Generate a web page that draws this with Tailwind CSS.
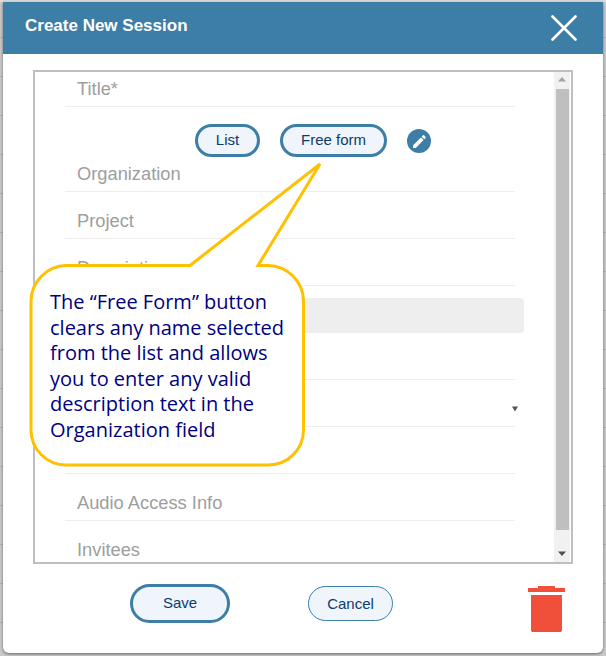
<!DOCTYPE html>
<html lang="en">
<head>
    <meta charset="UTF-8">
    <title>Create New Session</title>
    <script src="https://cdn.jsdelivr.net/npm/@tailwindcss/browser@4"></script>
</head>
<body class="relative w-[606px] h-[656px] overflow-hidden bg-[repeating-linear-gradient(180deg,#c9c9c9_0,#c9c9c9_37px,#b2b2b2_37px,#b2b2b2_38px,#c9c9c9_38px,#c9c9c9_39px)] font-['Liberation_Sans',sans-serif]">

    <!-- Strip of the page above the modal -->
    <div class="h-[2px] bg-[#dcdcdc]"></div>

    <!-- Modal -->
    <div class="relative ml-[3px] w-[600px] h-[651px] bg-white rounded-b-[6px] shadow-[0_1px_3px_rgba(0,0,0,0.5)] flex flex-col">

        <!-- Header -->
        <div class="h-[52px] shrink-0 bg-[#3d7ea6] flex items-center justify-between pl-[22px] pr-[26px]">
            <span class="text-[17px] font-bold text-white -mt-[5px]">Create New Session</span>
            <svg class="w-[26px] h-[26px]" viewBox="0 0 26 26" fill="none" stroke="#ffffff" stroke-width="2.6" stroke-linecap="round">
                <path d="M1.5 1.5 L24.5 24.5 M24.5 1.5 L1.5 24.5"/>
            </svg>
        </div>

        <!-- Form frame -->
        <div class="mt-[16px] ml-[30px] w-[540px] h-[494px] shrink-0 border-2 border-[#bfbfbf] flex overflow-hidden">
            <div class="flex-1 overflow-hidden pl-[30px] text-[18.3px] text-[#9e9e9e]">
                <div class="w-[450px] h-[35px] border-b border-[#eeeeee] pl-[12px] leading-[34px]">Title*</div>

                <!-- List / Free form -->
                <div class="h-[38px] w-[450px] flex items-start pl-[130px] pt-[17px] text-[15px] text-[#0b3b6f]">
                    <button class="w-[65px] h-[33px] shrink-0 rounded-full border-[3px] border-[#3d7ea6] bg-[#eff5fa]">List</button>
                    <button class="ml-[20px] w-[107px] h-[33px] shrink-0 rounded-full border-[3px] border-[#3d7ea6] bg-[#eff5fa]">Free form</button>
                    <span class="ml-[20px] mt-[5px] w-[24px] h-[24px] shrink-0 rounded-full bg-[#3d7ea6] flex items-center justify-center">
                        <svg class="w-[17px] h-[17px]" viewBox="0 0 24 24" fill="#ffffff">
                            <path d="M3 17.25V21h3.75L17.81 9.94l-3.75-3.75L3 17.25zM20.71 7.04a1 1 0 0 0 0-1.41l-2.34-2.34a1 1 0 0 0-1.41 0l-1.83 1.83 3.75 3.75 1.83-1.83z"/>
                        </svg>
                    </span>
                </div>

                <div class="w-[450px] h-[47px] border-b border-[#eeeeee] pl-[12px] pt-[16px] leading-[26px]">Organization</div>
                <div class="w-[450px] h-[47px] border-b border-[#eeeeee] pl-[12px] pt-[16px] leading-[26px]">Project</div>
                <div class="w-[450px] h-[47px] border-b border-[#eeeeee] pl-[12px] pt-[16px] leading-[26px]">Description</div>
                <div class="w-[450px] h-[47px] border-b border-[#eeeeee] pt-[12px]">
                    <div class="w-[459px] h-[35px] rounded-[4px] bg-[#eeeeee]"></div>
                </div>
                <div class="w-[450px] h-[47px] border-b border-[#eeeeee]"></div>
                <div class="w-[450px] h-[47px] border-b border-[#eeeeee] flex justify-end items-center pt-[12px]">
                    <svg class="w-[6px] h-[6px] -mr-[3px]" viewBox="0 0 6 6" fill="#555555"><path d="M0 0.5h6L3 5.5z"/></svg>
                </div>
                <div class="w-[450px] h-[47px] border-b border-[#eeeeee]"></div>
                <div class="w-[450px] h-[47px] border-b border-[#eeeeee] pl-[12px] pt-[16px] leading-[26px]">Audio Access Info</div>
                <div class="w-[450px] h-[47px] pl-[12px] pt-[16px] leading-[26px]">Invitees</div>
            </div>

            <!-- Scrollbar -->
            <div class="w-[16px] shrink-0 mr-[1px] bg-[#f1f1f1] flex flex-col items-center">
                <svg class="w-[16px] h-[17px] shrink-0" viewBox="0 0 16 17" fill="#a3a3a3"><path d="M8 5l4 4.5H4z"/></svg>
                <div class="w-[13px] h-[441px] shrink-0 bg-[#bfbfbf]"></div>
                <svg class="w-[16px] h-[17px] shrink-0 mt-[15px]" viewBox="0 0 16 17" fill="#505050"><path d="M4 6.5h8L8 11z"/></svg>
            </div>
        </div>

        <!-- Footer -->
        <div class="flex items-start text-[15px] text-[#0b3b6f]">
            <button class="ml-[127px] mt-[20px] w-[100px] h-[39px] rounded-full border-[3px] border-[#3d7ea6] bg-[#eff5fa]">Save</button>
            <button class="ml-[78px] mt-[22px] w-[85px] h-[35px] pt-[2px] rounded-full border border-[#3d7ea6] bg-[#eff5fa]">Cancel</button>
            <svg class="ml-[135px] mt-[22px] w-[38px] h-[46px]" viewBox="0 0 38 46" fill="#f0503a">
                <path d="M10 0h17v2h10v4H0V2h10z"/>
                <path d="M3 9h31v35.500l-1 1.500H4l-1-1.500z"/>
            </svg>
        </div>
    </div>

    <!-- Callout -->
    <svg class="absolute left-0 top-0" width="606" height="656" fill="none">
        <path d="M190 265.500 L320 164 L258 265.500 L268 265.500 A36 36 0 0 1 303.500 301 L303.500 430 A35 35 0 0 1 268 465 L66 465 A35 35 0 0 1 31 430 L31 301 A36 36 0 0 1 66 265.500 Z" fill="#ffffff" stroke="#ffc000" stroke-width="3"/>
    </svg>
    <div class="absolute left-[50px] top-[289px] w-[250px] text-[20px] leading-[25.6px] text-[#000080] font-['Open_Sans',sans-serif]">
        The “Free Form” button<br>clears any name selected<br>from the list and allows<br>you to enter any valid<br>description text in the<br>Organization field
    </div>
</body>
</html>
